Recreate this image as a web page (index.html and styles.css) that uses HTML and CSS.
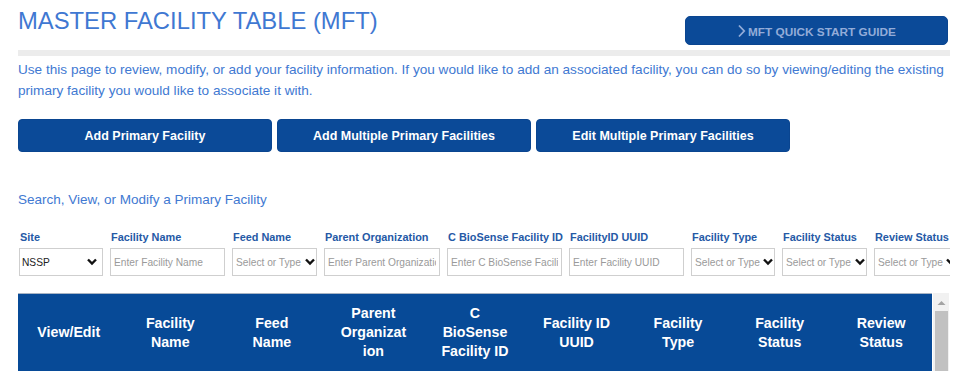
FILE: index.html
```html
<!DOCTYPE html>
<html lang="en">
<head>
    <meta charset="UTF-8">
    <meta name="viewport" content="width=device-width, initial-scale=1.0">
    <title>Master Facility Table</title>
    <link rel="stylesheet" href="styles.css">
</head>
<body>
    <div class="page">
        <div class="top">
            <h1>MASTER FACILITY TABLE (MFT)</h1>
            <button class="guide-btn" type="button">
                <svg class="guide-arrow" width="9" height="14" viewBox="0 0 9 14"><path d="M2 1.5 L7.2 7 L2 12.5" fill="none" stroke="#93acd8" stroke-width="1.8"/></svg>
                MFT QUICK START GUIDE
            </button>
        </div>
        <div class="divider"></div>

        <p class="intro">Use this page to review, modify, or add your facility information. If you would like to add an associated facility, you can do so by viewing/editing the existing primary facility you would like to associate it with.</p>

        <div class="actions">
            <button class="action-btn" type="button">Add Primary Facility</button>
            <button class="action-btn" type="button">Add Multiple Primary Facilities</button>
            <button class="action-btn" type="button">Edit Multiple Primary Facilities</button>
        </div>

        <h2>Search, View, or Modify a Primary Facility</h2>

        <div class="filters">
            <div class="filter w84">
                <label>Site</label>
                <div class="select">
                    <span class="value">NSSP</span>
                    <svg width="10" height="8" viewBox="0 0 10 8"><path d="M1 1.5 L5 5.5 L9 1.5" fill="none" stroke="#111" stroke-width="2.4"/></svg>
                </div>
            </div>
            <div class="filter w115">
                <label for="f-name">Facility Name</label>
                <input type="text" id="f-name" placeholder="Enter Facility Name">
            </div>
            <div class="filter w85">
                <label>Feed Name</label>
                <div class="select tight">
                    <span class="hint">Select or Type</span>
                    <svg width="10" height="8" viewBox="0 0 10 8"><path d="M1 1.5 L5 5.5 L9 1.5" fill="none" stroke="#111" stroke-width="2.4"/></svg>
                </div>
            </div>
            <div class="filter w116">
                <label for="f-parent">Parent Organization</label>
                <input type="text" id="f-parent" placeholder="Enter Parent Organization">
            </div>
            <div class="filter w115">
                <label for="f-bio">C BioSense Facility ID</label>
                <input type="text" id="f-bio" placeholder="Enter C BioSense Facility ID">
            </div>
            <div class="filter w115">
                <label for="f-uuid">FacilityID UUID</label>
                <input type="text" id="f-uuid" placeholder="Enter Facility UUID">
            </div>
            <div class="filter w84">
                <label>Facility Type</label>
                <div class="select tight">
                    <span class="hint">Select or Type</span>
                    <svg width="10" height="8" viewBox="0 0 10 8"><path d="M1 1.5 L5 5.5 L9 1.5" fill="none" stroke="#111" stroke-width="2.4"/></svg>
                </div>
            </div>
            <div class="filter w85">
                <label>Facility Status</label>
                <div class="select tight">
                    <span class="hint">Select or Type</span>
                    <svg width="10" height="8" viewBox="0 0 10 8"><path d="M1 1.5 L5 5.5 L9 1.5" fill="none" stroke="#111" stroke-width="2.4"/></svg>
                </div>
            </div>
            <div class="filter w84">
                <label>Review Status</label>
                <div class="select tight">
                    <span class="hint">Select or Type</span>
                    <svg width="10" height="8" viewBox="0 0 10 8"><path d="M1 1.5 L5 5.5 L9 1.5" fill="none" stroke="#111" stroke-width="2.4"/></svg>
                </div>
            </div>
        </div>

        <div class="grid-wrap">
            <table class="grid">
                <thead>
                    <tr>
                        <th>View/Edit</th>
                        <th>Facility Name</th>
                        <th>Feed Name</th>
                        <th>Parent Organization</th>
                        <th>C BioSense Facility ID</th>
                        <th>Facility ID UUID</th>
                        <th>Facility Type</th>
                        <th>Facility Status</th>
                        <th>Review Status</th>
                    </tr>
                </thead>
            </table>
            <div class="scrollbar">
                <svg class="scroll-up" width="9" height="6" viewBox="0 0 9 6"><path d="M0.5 5 L4.5 1 L8.5 5 Z" fill="#a3a3a3"/></svg>
                <div class="thumb"></div>
            </div>
        </div>
    </div>
</body>
</html>
```

FILE: styles.css
```css
/* General Styles */
body {
    margin: 0;
    font-family: "Liberation Sans", Arial, sans-serif;
    background-color: #fff;
}

.page {
    width: 932px;
    padding-left: 18px;
}

/* Header */
.top {
    display: flex;
    justify-content: space-between;
    align-items: flex-start;
    height: 50px;
}

h1 {
    margin: 7px 0 0 0;
    font-size: 23.8px;
    line-height: 28px;
    font-weight: normal;
    color: #3f78d2;
}

.guide-btn {
    display: flex;
    align-items: center;
    justify-content: center;
    gap: 2px;
    width: 263px;
    height: 29px;
    margin: 16px 2px 0 0;
    padding: 2px 0 0 0;
    background-color: #0b4a98;
    border: 1px solid #0a4590;
    border-radius: 5px;
    color: #93acd8;
    font-family: inherit;
    font-size: 11.8px;
    font-weight: bold;
    cursor: pointer;
}

.guide-arrow {
    margin-top: -2px;
}

.divider {
    height: 6px;
    background-color: #ececec;
}

.intro {
    margin: 3px 0 0 0;
    font-size: 13.6px;
    line-height: 21px;
    color: #4179d2;
}

/* Action buttons */
.actions {
    display: flex;
    gap: 5px;
    margin-top: 18px;
}

.action-btn {
    width: 254px;
    height: 33px;
    background-color: #0b4a98;
    border: 1px solid #0a4590;
    border-radius: 4px;
    color: #fff;
    font-family: inherit;
    font-size: 12.5px;
    font-weight: bold;
    cursor: pointer;
}

.action-btn:hover {
    background-color: #083d7f;
}

h2 {
    margin: 37px 0 0 0;
    font-size: 13.5px;
    line-height: 21px;
    font-weight: normal;
    color: #4179d2;
}

/* Filters */
.filters {
    display: flex;
    gap: 7px;
    margin-top: 21px;
    padding-left: 1px;
    overflow: hidden;
}

.filter {
    flex: none;
}

.w84 { width: 84px; }
.w85 { width: 85px; }
.w115 { width: 115px; }
.w116 { width: 116px; }

.filter label {
    display: block;
    padding-left: 1px;
    margin-bottom: 4px;
    font-size: 10.9px;
    line-height: 13px;
    font-weight: bold;
    color: #2559a6;
    white-space: nowrap;
}

.filter input,
.select {
    box-sizing: border-box;
    width: 100%;
    height: 28px;
    border: 1px solid #cfcfcf;
    background: #fff;
    font-family: inherit;
    font-size: 10.2px;
}

.filter input {
    padding: 0 3px;
    outline: none;
}

.filter input::placeholder {
    color: #9a9a9a;
}

.select {
    display: flex;
    align-items: center;
    justify-content: space-between;
    padding: 0 5px 0 2px;
}

.select.tight {
    padding: 0 1px 0 3px;
}

.select .value {
    color: #222;
}

.select .hint {
    color: #9a9a9a;
    white-space: nowrap;
}

.select svg {
    flex: none;
}

/* Table */
.grid-wrap {
    display: flex;
    margin-top: 17px;
    height: 78px;
    overflow: hidden;
}

.grid {
    width: 914px;
    flex: none;
    border-collapse: collapse;
    table-layout: fixed;
    background-color: #074a97;
    border-top: 1px solid #a8b4c4;
}

.grid th {
    padding: 10px 16.5px;
    font-size: 14.2px;
    line-height: 19px;
    font-weight: bold;
    color: #fff;
    text-align: center;
    vertical-align: middle;
    word-wrap: break-word;
}

.scrollbar {
    width: 16px;
    margin-left: 1px;
    background-color: #f1f1f1;
    display: flex;
    flex-direction: column;
    align-items: center;
}

.scroll-up {
    margin-top: 7px;
}

.thumb {
    width: 13px;
    flex: 1;
    margin-top: 5px;
    background-color: #c1c1c1;
}
```
